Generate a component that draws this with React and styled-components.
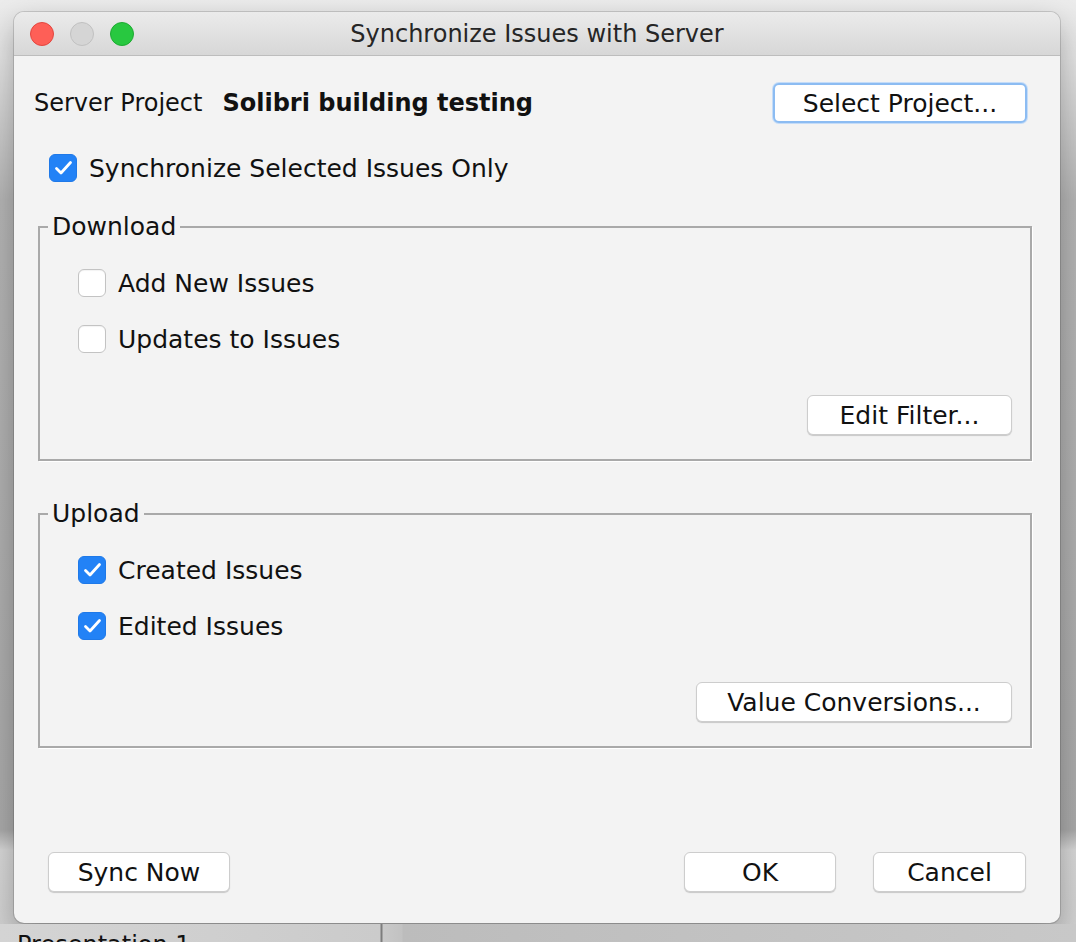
import React, { useState } from 'react';
import styled, { createGlobalStyle } from 'styled-components';

const GlobalStyle = createGlobalStyle`
  html, body {
    margin: 0;
    padding: 0;
    height: 100%;
    overflow: hidden;
  }
  body {
    font-family: "DejaVu Sans", "Liberation Sans", sans-serif;
    color: #111;
    background: linear-gradient(to bottom, #ececec 0px, #e2e2e2 60px, #b4b4b4 200px, #a9a9a9 830px, #d6d6d6 850px, #cfcfcf 942px);
  }
`;

const Desktop = styled.div`
  width: 1076px;
  height: 942px;
  display: flex;
  flex-direction: column;
  padding: 12px 0 0 14px;
  box-sizing: border-box;
`;

const Window = styled.div`
  width: 1046px;
  height: 911px;
  flex: none;
  display: flex;
  flex-direction: column;
  border-radius: 10px;
  overflow: hidden;
  background: #f3f3f3;
  box-shadow: 0 0 0 1px rgba(0, 0, 0, 0.14), 0 12px 30px rgba(0, 0, 0, 0.28);
`;

const TitleBar = styled.div`
  height: 44px;
  flex: none;
  display: flex;
  align-items: center;
  position: relative;
  background: linear-gradient(to bottom, #ebebeb, #d7d7d7);
  border-bottom: 1px solid #bdbdbd;
  box-sizing: border-box;
`;

const Lights = styled.div`
  display: flex;
  gap: 16px;
  padding-left: 16px;
`;

const Light = styled.span`
  width: 24px;
  height: 24px;
  border-radius: 50%;
  box-sizing: border-box;
  background: ${(p) => p.$fill};
  border: 1px solid ${(p) => p.$edge};
`;

const Title = styled.div`
  position: absolute;
  left: 0;
  right: 0;
  text-align: center;
  font-size: 24px;
  color: #262626;
  pointer-events: none;
`;

const Body = styled.div`
  flex: 1;
  display: flex;
  flex-direction: column;
  padding: 27px 28px 31px 24px;
`;

const ProjectRow = styled.div`
  display: flex;
  align-items: center;
  margin: 0 5px 0 -4px;
  font-size: 24px;
`;

const ProjectName = styled.span`
  font-weight: bold;
  margin-left: 20px;
  flex: 1;
`;

const Button = styled.button`
  height: 40px;
  min-width: ${(p) => p.$width || 0}px;
  padding: 0 24px;
  font-family: inherit;
  font-size: 25px;
  color: #111;
  background: #fff;
  border: 1px solid #cdcdcd;
  border-radius: 6px;
  box-shadow: 0 1px 1px rgba(0, 0, 0, 0.18);
  box-sizing: border-box;
  cursor: default;

  ${(p) =>
    p.$focused &&
    `
    border: 2px solid #8cbcf2;
    box-shadow: 0 0 0 1px #c4dcf8;
  `}
`;

const CheckRow = styled.label`
  display: flex;
  align-items: center;
  gap: 12px;
  height: 28px;
  font-size: 25px;
  margin-left: ${(p) => p.$indent || 0}px;
`;

const Box = styled.span`
  width: 28px;
  height: 28px;
  flex: none;
  border-radius: 6px;
  box-sizing: border-box;
  display: flex;
  align-items: center;
  justify-content: center;
  background: ${(p) => (p.$on ? '#2282f6' : '#fff')};
  border: 1px solid ${(p) => (p.$on ? '#1f79e8' : '#c3c3c3')};
  box-shadow: ${(p) => (p.$on ? 'none' : 'inset 0 1px 1px rgba(0,0,0,0.05)')};
`;

const Group = styled.fieldset`
  margin: 0;
  padding: 28px 18px 24px 8px;
  border: 2px solid #a9a9a9;
  display: flex;
  flex-direction: column;
  gap: 28px;
  box-shadow: 1px 1px 0 #fff;
`;

const Legend = styled.legend`
  font-size: 25px;
  padding: 0 4px;
`;

const GroupFoot = styled.div`
  display: flex;
  justify-content: flex-end;
  margin-top: 14px;
`;

const Footer = styled.div`
  margin-top: auto;
  display: flex;
  align-items: center;
  gap: 37px;
  padding: 0 6px 0 10px;
`;

const Spacer = styled.div`
  flex: 1;
  margin-left: -37px;
`;

const Gap = styled.div`
  height: ${(p) => p.$h}px;
  flex: none;
`;

const Strip = styled.div`
  flex: 1;
  display: flex;
  margin-left: -14px;
  margin-top: 1px;
  background: linear-gradient(to right, #d4d4d4 0px, #cbcbcb 380px, #7d7d7d 381px, #7d7d7d 382px, #c9c9c9 383px, #c2c2c2 402px, #bcbcbc 403px, #c8c8c8 100%);
  overflow: hidden;
`;

const StripLabel = styled.div`
  font-size: 24px;
  padding: 7px 0 0 17px;
  color: #111;
  white-space: nowrap;
`;

function Check({ on }) {
  return (
    <Box $on={on}>
      {on && (
        <svg width="19" height="16" viewBox="0 0 19 16">
          <path d="M2.5 8.5 L7 13 L16.5 2.5" fill="none" stroke="#fff" strokeWidth="2.8" strokeLinecap="round" strokeLinejoin="round" />
        </svg>
      )}
    </Box>
  );
}

function Option({ label, on, indent, onToggle }) {
  return (
    <CheckRow $indent={indent} onClick={onToggle}>
      <Check on={on} />
      {label}
    </CheckRow>
  );
}

export default function App() {
  const [opts, setOpts] = useState({
    selectedOnly: true,
    addNew: false,
    updates: false,
    created: true,
    edited: true,
  });
  const toggle = (k) => () => setOpts((o) => ({ ...o, [k]: !o[k] }));

  return (
    <>
      <GlobalStyle />
      <Desktop>
        <Window>
          <TitleBar>
            <Lights>
              <Light $fill="#fe5f57" $edge="#e2463f" />
              <Light $fill="#d5d5d5" $edge="#c0c0c0" />
              <Light $fill="#28c840" $edge="#1eaa32" />
            </Lights>
            <Title>Synchronize Issues with Server</Title>
          </TitleBar>
          <Body>
            <ProjectRow>
              Server Project
              <ProjectName>Solibri building testing</ProjectName>
              <Button $focused $width={254}>Select Project...</Button>
            </ProjectRow>

            <Gap $h={31} />
            <Option label="Synchronize Selected Issues Only" on={opts.selectedOnly} indent={11} onToggle={toggle('selectedOnly')} />

            <Gap $h={30} />
            <Group>
              <Legend>Download</Legend>
              <Option label="Add New Issues" on={opts.addNew} indent={30} onToggle={toggle('addNew')} />
              <Option label="Updates to Issues" on={opts.updates} indent={30} onToggle={toggle('updates')} />
              <GroupFoot>
                <Button $width={205}>Edit Filter...</Button>
              </GroupFoot>
            </Group>

            <Gap $h={38} />
            <Group>
              <Legend>Upload</Legend>
              <Option label="Created Issues" on={opts.created} indent={30} onToggle={toggle('created')} />
              <Option label="Edited Issues" on={opts.edited} indent={30} onToggle={toggle('edited')} />
              <GroupFoot>
                <Button $width={316}>Value Conversions...</Button>
              </GroupFoot>
            </Group>

            <Footer>
              <Button $width={182}>Sync Now</Button>
              <Spacer />
              <Button $width={152}>OK</Button>
              <Button $width={153}>Cancel</Button>
            </Footer>
          </Body>
        </Window>
        <Strip>
          <StripLabel>Presentation 1</StripLabel>
        </Strip>
      </Desktop>
    </>
  );
}
